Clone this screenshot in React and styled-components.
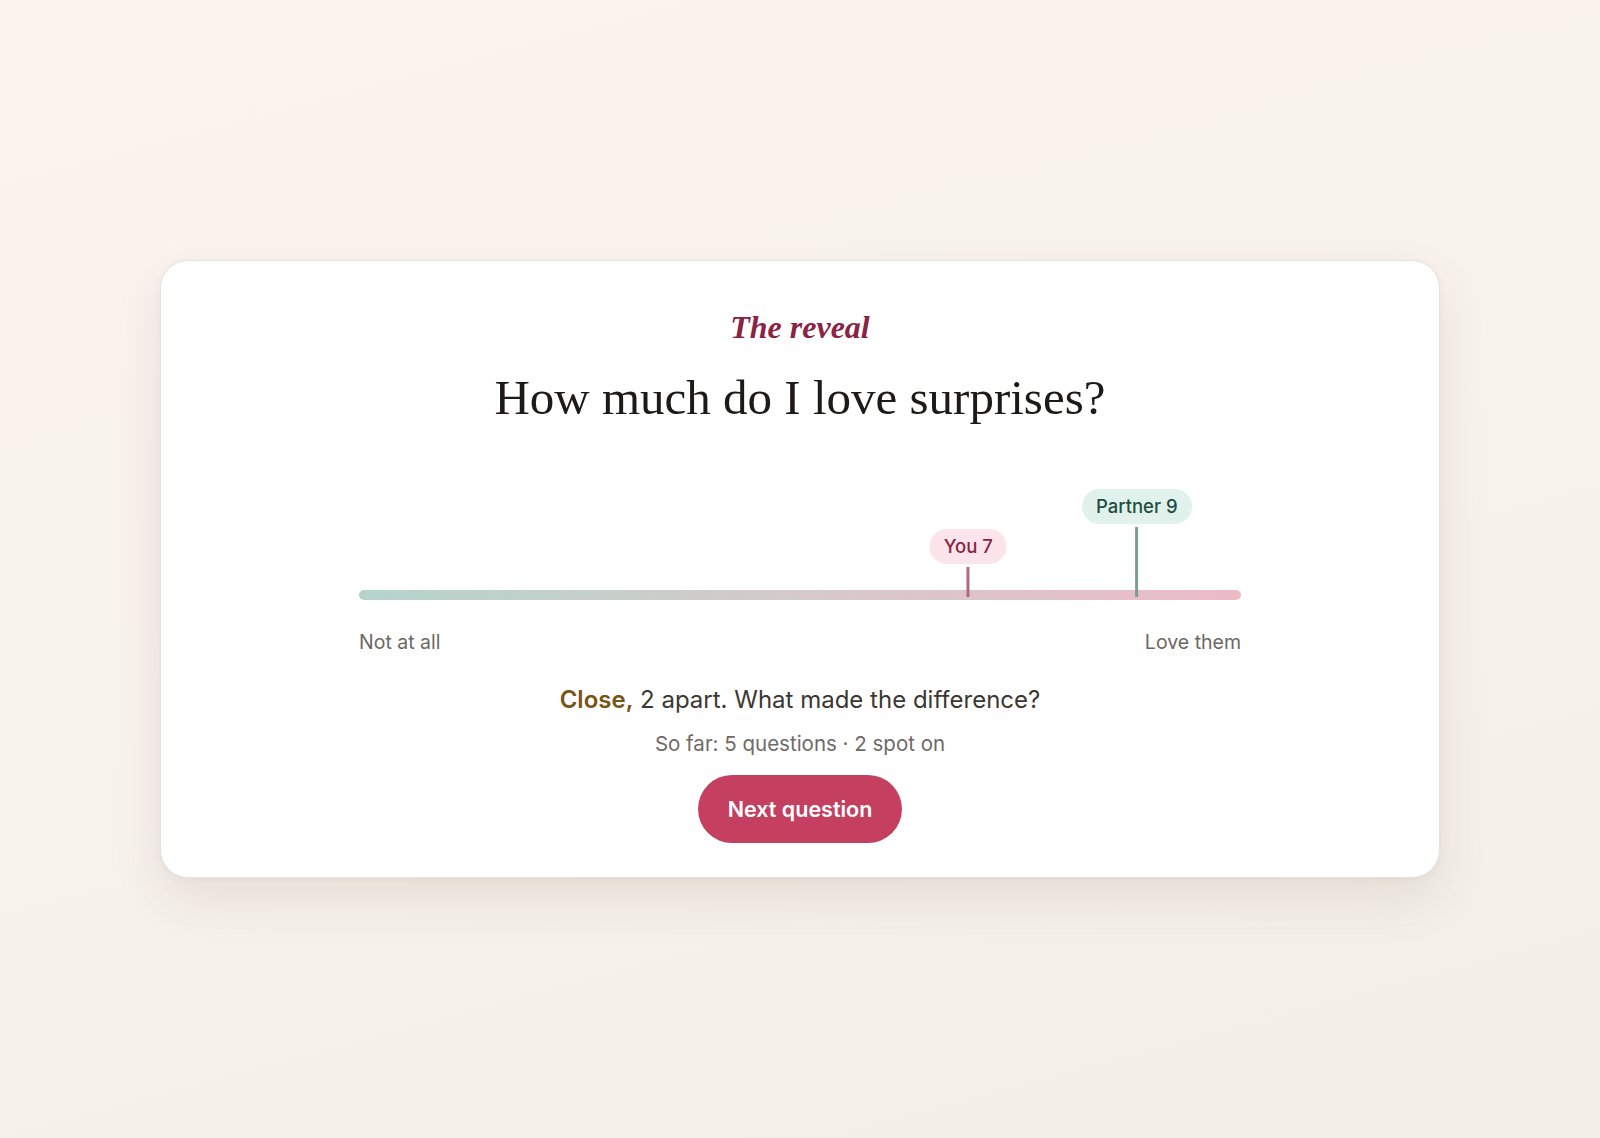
import React from 'react';
import styled, { createGlobalStyle } from 'styled-components';

const GlobalStyle = createGlobalStyle`
  html, body {
    margin: 0;
    padding: 0;
    height: 100%;
  }
  body {
    font-family: Inter, "Noto Sans", sans-serif;
    background: linear-gradient(165deg, #fbf3ee 0%, #f7f2ec 55%, #f3eee8 100%);
  }
  #root {
    min-height: 100vh;
  }
`;

const Page = styled.div`
  min-height: 100vh;
  display: flex;
  align-items: center;
  justify-content: center;
`;

const Card = styled.div`
  width: 1280px;
  box-sizing: border-box;
  background: #ffffff;
  border: 1px solid #e8e1d9;
  border-radius: 28px;
  box-shadow: 0 22px 50px rgba(90, 70, 50, 0.10), 0 2px 6px rgba(90, 70, 50, 0.05);
  padding: 46px 0 34px;
  display: flex;
  flex-direction: column;
  align-items: center;
`;

const Eyebrow = styled.div`
  font-family: "Liberation Serif", serif;
  font-style: italic;
  font-weight: 700;
  font-size: 32px;
  line-height: 40px;
  color: #8a2346;
`;

const Question = styled.h1`
  margin: 21px 0 0;
  font-family: "Liberation Serif", serif;
  font-weight: 400;
  font-size: 49px;
  line-height: 60px;
  color: #1d1a18;
`;

const Scale = styled.div`
  width: 882px;
  margin-top: 60px;
`;

const Rail = styled.div`
  position: relative;
  height: 112px;
  display: flex;
  align-items: flex-end;
`;

const Track = styled.div`
  width: 100%;
  height: 10px;
  border-radius: 5px;
  background: linear-gradient(90deg, #b4d4cb 0%, #d5caca 50%, #ebbbc7 100%);
`;

const Marker = styled.div`
  position: absolute;
  bottom: 3px;
  transform: translateX(-50%);
  display: flex;
  flex-direction: column;
  align-items: center;
  gap: 3px;
`;

const Pill = styled.div`
  padding: 6px 14px;
  border-radius: 18px;
  font-size: 18.5px;
  line-height: 23px;
  font-weight: 500;
  white-space: nowrap;
  background: ${p => (p.$tone === 'partner' ? '#e1f2ec' : '#fbe5ea')};
  color: ${p => (p.$tone === 'partner' ? '#1f4e40' : '#8a2346')};
`;

const Stem = styled.div`
  width: 3px;
  height: ${p => p.$length}px;
  background: ${p => (p.$tone === 'partner' ? '#7b9e96' : '#b36a80')};
`;

const Ends = styled.div`
  display: flex;
  justify-content: space-between;
  margin-top: 30px;
  font-size: 19.5px;
  line-height: 24px;
  color: #6d6762;
`;

const Verdict = styled.p`
  margin: 31px 0 0;
  font-size: 24px;
  line-height: 30px;
  color: #3b3733;
`;

const Strong = styled.span`
  font-weight: 600;
  color: #7a5415;
`;

const Tally = styled.p`
  margin: 17px 0 0;
  font-size: 20.5px;
  line-height: 24px;
  color: #6f6a66;
`;

const NextButton = styled.button`
  margin-top: 19px;
  height: 68px;
  padding: 0 30px;
  border: none;
  border-radius: 34px;
  background: #c43f60;
  color: #ffffff;
  font-family: Inter, "Noto Sans", sans-serif;
  font-size: 21.5px;
  font-weight: 600;
  cursor: pointer;
`;

// value on a 0–10 scale, with a 20px inset at each end of the track
const place = v => ({ left: `calc(20px + (100% - 40px) * ${v / 10})` });

const answers = [
  { label: 'You', value: 7, tone: 'you', stem: 30 },
  { label: 'Partner', value: 9, tone: 'partner', stem: 70 },
];

export default function App() {
  return (
    <>
      <GlobalStyle />
      <Page>
        <Card>
          <Eyebrow>The reveal</Eyebrow>
          <Question>How much do I love surprises?</Question>
          <Scale>
            <Rail>
              <Track />
              {answers.map(a => (
                <Marker key={a.label} style={place(a.value)}>
                  <Pill $tone={a.tone}>{a.label} {a.value}</Pill>
                  <Stem $tone={a.tone} $length={a.stem} />
                </Marker>
              ))}
            </Rail>
            <Ends>
              <span>Not at all</span>
              <span>Love them</span>
            </Ends>
          </Scale>
          <Verdict>
            <Strong>Close,</Strong> 2 apart. What made the difference?
          </Verdict>
          <Tally>So far: 5 questions · 2 spot on</Tally>
          <NextButton>Next question</NextButton>
        </Card>
      </Page>
    </>
  );
}
